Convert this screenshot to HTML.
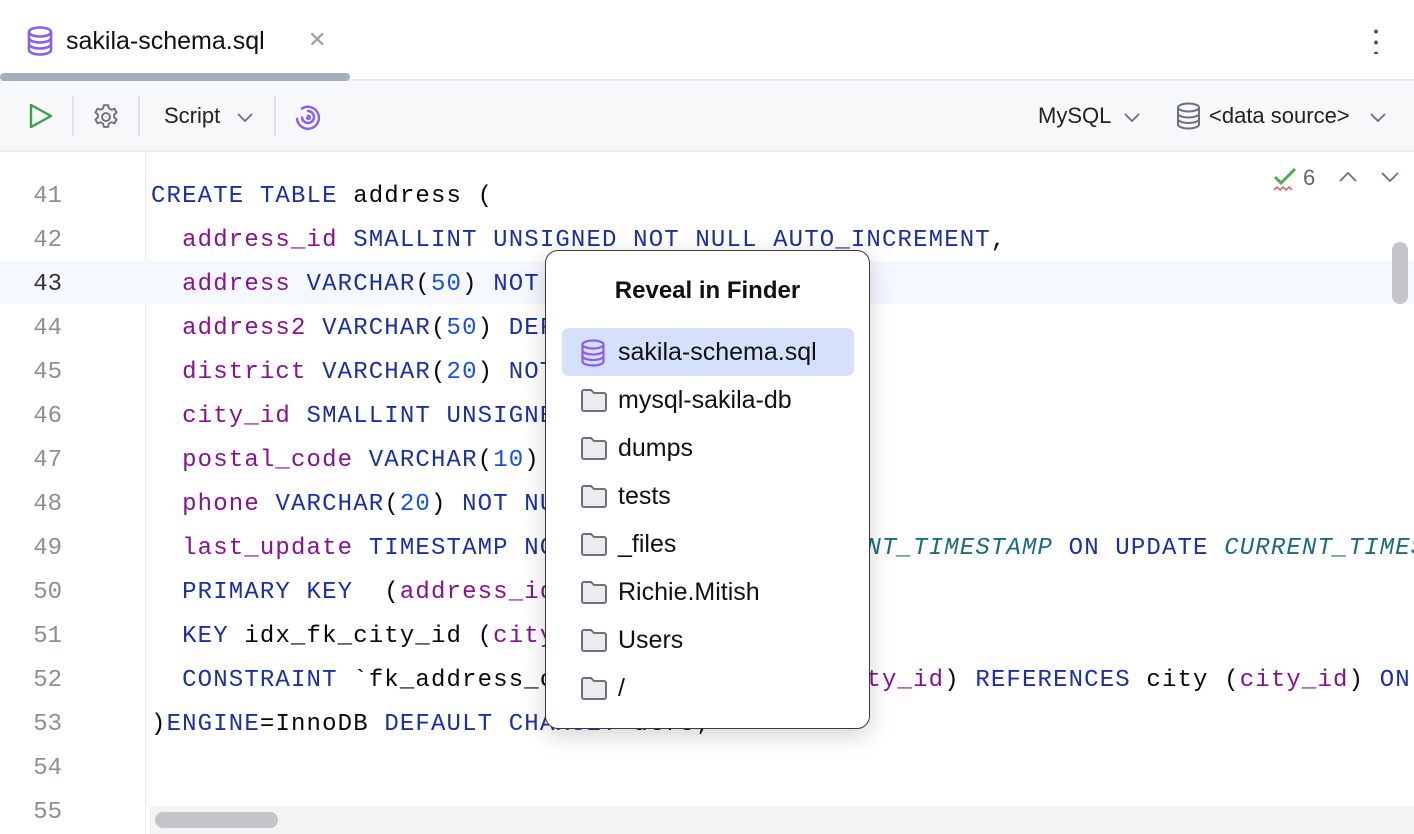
<!DOCTYPE html>
<html><head><meta charset="utf-8"><style>
*{margin:0;padding:0;box-sizing:border-box}
html,body{width:1414px;height:834px;overflow:hidden}
body{background:#fff;font-family:"Liberation Sans",sans-serif;position:relative}
.abs{position:absolute}
.tabbar{left:0;top:0;width:1414px;height:81px;background:#fff;border-bottom:2px solid #ebecf0}
.toolbar{left:0;top:81px;width:1414px;height:71px;background:#f7f8fa;border-bottom:2px solid #ebecf0}
.sep{top:96px;width:2px;height:40px;background:#e1e3e8}
.tb{font-size:22px;color:#222;top:103px}
.code{font-family:"Liberation Mono",monospace;font-size:24px;letter-spacing:1.15px;white-space:pre;line-height:44px}
.ln{left:0;width:62px;text-align:right;color:#8c8f99;font-family:"Liberation Mono",monospace;font-size:24px;line-height:44px}
.k{color:#1b2fa6}.p{color:#871094}.n{color:#1750eb}.i{color:#1c6a7e;font-style:italic}
.popup{left:545px;top:250px;width:325px;height:479px;background:#fff;border:1.5px solid #3a3a3a;border-radius:13px;box-shadow:0 6px 24px rgba(0,0,0,0.18)}
.item{position:absolute;left:16px;width:292px;height:48px;font-size:25px;color:#111;line-height:48px;padding-left:56px}
.item svg{position:absolute;left:18px;top:11px}
</style></head><body>
<div class="abs tabbar"></div>
<svg class="abs" style="left:26px;top:26px" width="28" height="30" viewBox="0 0 28 30"><g fill="none" stroke="#8b5cf6" stroke-width="2.6"><ellipse cx="14" cy="6" rx="11" ry="4.5"/><path d="M3 6v18c0 2.5 5 4.5 11 4.5s11-2 11-4.5V6M3 12c0 2.5 5 4.5 11 4.5s11-2 11-4.5M3 18c0 2.5 5 4.5 11 4.5s11-2 11-4.5"/></g></svg>
<div class="abs" style="left:66px;top:27px;font-size:25px;color:#111">sakila-schema.sql</div>
<div class="abs" style="left:308px;top:27px;font-size:22px;color:#9aa0aa">✕</div>
<div class="abs" style="left:1374px;top:26px;width:4px;height:28px;background:radial-gradient(circle,#555 1.8px,transparent 2.2px) 0 0/4px 11px"></div>
<div class="abs" style="left:0;top:73px;width:350px;height:8px;background:#a8adbd;border-radius:4px"></div>
<div class="abs toolbar"></div>
<svg class="abs" style="left:28px;top:102px" width="26" height="28" viewBox="0 0 26 28"><path d="M3 3L23 14L3 25Z" fill="none" stroke="#3f9e4b" stroke-width="2.4" stroke-linejoin="round"/></svg>
<div class="abs sep" style="left:72px"></div>
<svg class="abs" style="left:91px;top:102px" width="30" height="30" viewBox="0 0 24 24"><g fill="none" stroke="#6c707e" stroke-width="1.5"><circle cx="12" cy="12" r="3.2"/><path d="M10.3 2.5h3.4l.6 2.6 1.9 1.1 2.6-.8 1.7 2.9-2 1.8v2.2l2 1.8-1.7 2.9-2.6-.8-1.9 1.1-.6 2.6h-3.4l-.6-2.6-1.9-1.1-2.6.8-1.7-2.9 2-1.8v-2.2l-2-1.8 1.7-2.9 2.6.8 1.9-1.1z" stroke-linejoin="round"/></g></svg>
<div class="abs sep" style="left:138px"></div>
<div class="abs tb" style="left:164px">Script</div>
<svg class="abs" style="left:236px;top:112px" width="18" height="12"><path d="M2 2l7 7 7-7" fill="none" stroke="#6c707e" stroke-width="1.8"/></svg>
<div class="abs sep" style="left:274px"></div>
<svg class="abs" style="left:294px;top:103px" width="28" height="28" viewBox="0 0 28 28"><g fill="none" stroke="#8b5cf6" stroke-width="2.4" stroke-linecap="round"><path d="M8 5.5A11 11 0 1 1 3 16"/><path d="M14 8a6 6 0 1 1-6 6.5"/><path d="M14 13a1.5 1.5 0 1 1-1 2"/></g></svg>
<div class="abs tb" style="left:1038px">MySQL</div>
<svg class="abs" style="left:1123px;top:112px" width="18" height="12"><path d="M2 2l7 7 7-7" fill="none" stroke="#6c707e" stroke-width="1.8"/></svg>
<svg class="abs" style="left:1176px;top:102px" width="25" height="28" viewBox="0 0 25 28"><g fill="none" stroke="#6c707e" stroke-width="2"><ellipse cx="12.5" cy="5.5" rx="10.5" ry="4"/><path d="M2 5.5v17c0 2.2 4.7 4 10.5 4s10.5-1.8 10.5-4v-17M2 11.5c0 2.2 4.7 4 10.5 4s10.5-1.8 10.5-4M2 17c0 2.2 4.7 4 10.5 4s10.5-1.8 10.5-4"/></g></svg>
<div class="abs tb" style="left:1209px">&lt;data source&gt;</div>
<svg class="abs" style="left:1369px;top:112px" width="18" height="12"><path d="M2 2l7 7 7-7" fill="none" stroke="#6c707e" stroke-width="1.8"/></svg>

<div class="abs" style="left:145px;top:153px;width:1px;height:681px;background:#ebecf0"></div>
<div class="abs" style="left:0;top:261px;width:1414px;height:43px;background:#f5f8fe"></div>
<div class="abs" style="left:0;top:153px;width:145px;height:11px;overflow:hidden"><div class="ln" style="position:absolute;top:-27px">40</div></div>
<div class="abs" style="left:0;top:175px">
<div class="ln">41</div><div class="ln">42</div><div class="ln" style="color:#333">43</div><div class="ln">44</div><div class="ln">45</div><div class="ln">46</div><div class="ln">47</div><div class="ln">48</div><div class="ln">49</div><div class="ln">50</div><div class="ln">51</div><div class="ln">52</div><div class="ln">53</div><div class="ln">54</div><div class="ln">55</div>
</div>
<div class="abs" style="left:146px;top:153px;width:1268px;height:653px;overflow:hidden">
<div class="abs code" style="left:5px;top:22px;color:#080808"><span class="k">CREATE TABLE</span> address (
  <span class="p">address_id</span> <span class="k">SMALLINT UNSIGNED NOT NULL AUTO_INCREMENT</span>,
  <span class="p">address</span> <span class="k">VARCHAR</span>(<span class="n">50</span>) <span class="k">NOT NULL</span>,
  <span class="p">address2</span> <span class="k">VARCHAR</span>(<span class="n">50</span>) <span class="k">DEFAULT NULL</span>,
  <span class="p">district</span> <span class="k">VARCHAR</span>(<span class="n">20</span>) <span class="k">NOT NULL</span>,
  <span class="p">city_id</span> <span class="k">SMALLINT UNSIGNED NOT NULL</span>,
  <span class="p">postal_code</span> <span class="k">VARCHAR</span>(<span class="n">10</span>) <span class="k">DEFAULT NULL</span>,
  <span class="p">phone</span> <span class="k">VARCHAR</span>(<span class="n">20</span>) <span class="k">NOT NULL</span>,
  <span class="p">last_update</span> <span class="k">TIMESTAMP NOT NULL DEFAULT</span> <span class="i">CURRENT_TIMESTAMP</span> <span class="k">ON UPDATE</span> <span class="i">CURRENT_TIMESTAMP</span>,
  <span class="k">PRIMARY KEY</span>  (<span class="p">address_id</span>),
  <span class="k">KEY</span> idx_fk_city_id (<span class="p">city_id</span>),
  <span class="k">CONSTRAINT</span> `fk_address_city` <span class="k">FOREIGN KEY</span> (<span class="p">city_id</span>) <span class="k">REFERENCES</span> city (<span class="p">city_id</span>) <span class="k">ON UPDATE CASCADE</span>
)<span class="k">ENGINE</span>=InnoDB <span class="k">DEFAULT CHARSET</span>=utf8;
</div>
</div>
<svg class="abs" style="left:1273px;top:167px" width="26" height="26" viewBox="0 0 26 26"><path d="M2 10l6 6L22 2" fill="none" stroke="#4caf50" stroke-width="3"/><path d="M1 23l3-3 3 3 3-3 3 3 3-3 3 3" fill="none" stroke="#db5c5c" stroke-width="1.5"/></svg>
<div class="abs" style="left:1303px;top:165px;font-size:22px;color:#666">6</div>
<svg class="abs" style="left:1338px;top:170px" width="20" height="14"><path d="M2 11l8-8 8 8" fill="none" stroke="#6c707e" stroke-width="1.8"/></svg>
<svg class="abs" style="left:1380px;top:170px" width="20" height="14"><path d="M2 3l8 8 8-8" fill="none" stroke="#6c707e" stroke-width="1.8"/></svg>
<div class="abs" style="left:1392px;top:242px;width:16px;height:62px;background:#c4c5c8;border-radius:8px"></div>
<div class="abs" style="left:150px;top:806px;width:1264px;height:28px;background:#f4f4f4"></div>
<div class="abs" style="left:155px;top:812px;width:123px;height:16px;background:#c4c5c8;border-radius:8px"></div>

<div class="abs popup">
<div style="position:absolute;top:26px;width:100%;text-align:center;font-size:24px;font-weight:bold;color:#111">Reveal in Finder</div>
<div class="item" style="top:77px;background:#d5e0fb;border-radius:7px"><svg width="26" height="28" viewBox="0 0 26 28"><g fill="none" stroke="#8b5cf6" stroke-width="2.2"><ellipse cx="13" cy="5.5" rx="10.5" ry="4"/><path d="M2.5 5.5v17c0 2.2 4.7 4 10.5 4s10.5-1.8 10.5-4v-17M2.5 11.5c0 2.2 4.7 4 10.5 4s10.5-1.8 10.5-4M2.5 17c0 2.2 4.7 4 10.5 4s10.5-1.8 10.5-4"/></g></svg>sakila-schema.sql</div>
<div class="item" style="top:125px"><svg width="28" height="26"><path d="M2 5a2 2 0 0 1 2-2h7l3 3h10a2 2 0 0 1 2 2v14a2 2 0 0 1-2 2H4a2 2 0 0 1-2-2z" fill="#ebecf0" stroke="#6c707e" stroke-width="2"/></svg>mysql-sakila-db</div>
<div class="item" style="top:173px"><svg width="28" height="26"><path d="M2 5a2 2 0 0 1 2-2h7l3 3h10a2 2 0 0 1 2 2v14a2 2 0 0 1-2 2H4a2 2 0 0 1-2-2z" fill="#ebecf0" stroke="#6c707e" stroke-width="2"/></svg>dumps</div>
<div class="item" style="top:221px"><svg width="28" height="26"><path d="M2 5a2 2 0 0 1 2-2h7l3 3h10a2 2 0 0 1 2 2v14a2 2 0 0 1-2 2H4a2 2 0 0 1-2-2z" fill="#ebecf0" stroke="#6c707e" stroke-width="2"/></svg>tests</div>
<div class="item" style="top:269px"><svg width="28" height="26"><path d="M2 5a2 2 0 0 1 2-2h7l3 3h10a2 2 0 0 1 2 2v14a2 2 0 0 1-2 2H4a2 2 0 0 1-2-2z" fill="#ebecf0" stroke="#6c707e" stroke-width="2"/></svg>_files</div>
<div class="item" style="top:317px"><svg width="28" height="26"><path d="M2 5a2 2 0 0 1 2-2h7l3 3h10a2 2 0 0 1 2 2v14a2 2 0 0 1-2 2H4a2 2 0 0 1-2-2z" fill="#ebecf0" stroke="#6c707e" stroke-width="2"/></svg>Richie.Mitish</div>
<div class="item" style="top:365px"><svg width="28" height="26"><path d="M2 5a2 2 0 0 1 2-2h7l3 3h10a2 2 0 0 1 2 2v14a2 2 0 0 1-2 2H4a2 2 0 0 1-2-2z" fill="#ebecf0" stroke="#6c707e" stroke-width="2"/></svg>Users</div>
<div class="item" style="top:413px"><svg width="28" height="26"><path d="M2 5a2 2 0 0 1 2-2h7l3 3h10a2 2 0 0 1 2 2v14a2 2 0 0 1-2 2H4a2 2 0 0 1-2-2z" fill="#ebecf0" stroke="#6c707e" stroke-width="2"/></svg>/</div>
</div>
</body></html>
